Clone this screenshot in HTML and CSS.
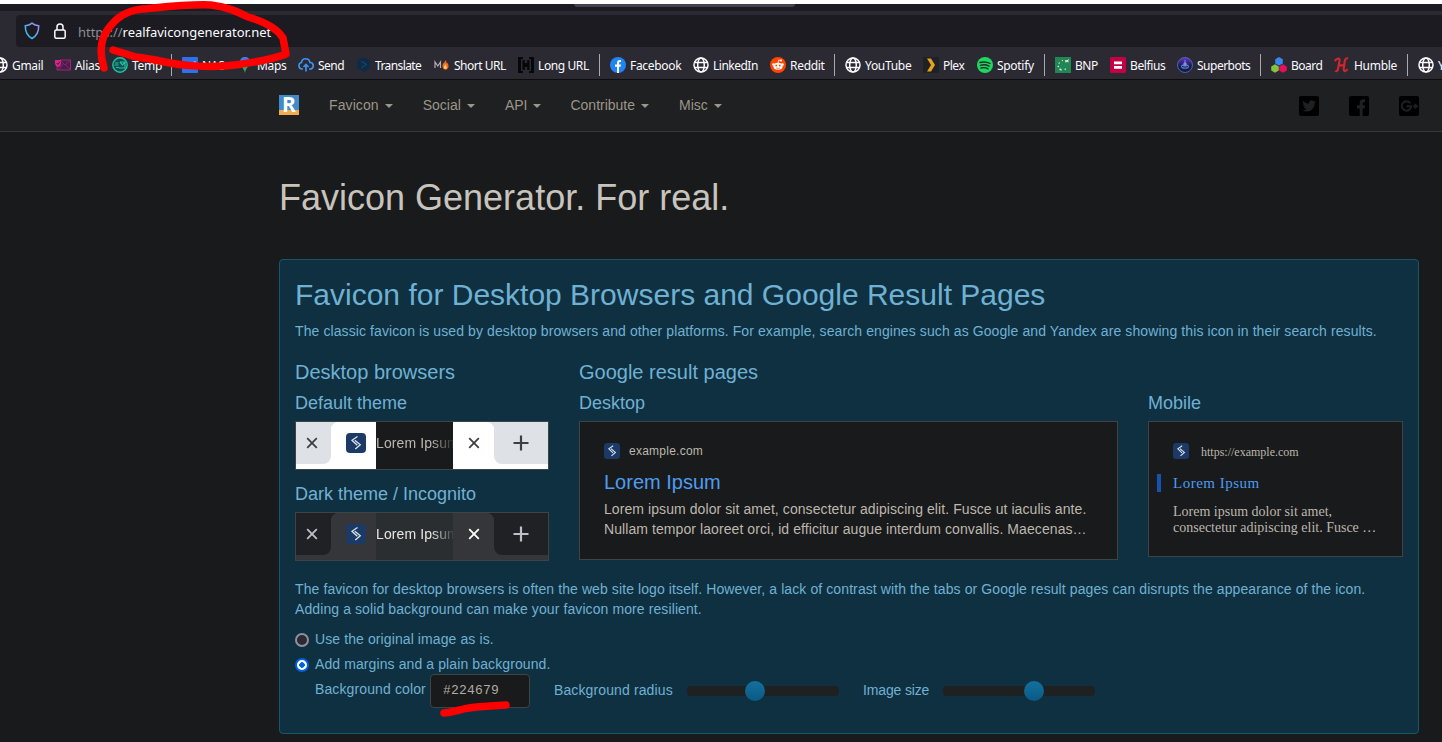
FILE: index.html
```html
<!DOCTYPE html>
<html lang="en">
<head>
<meta charset="utf-8">
<title>Favicon Generator. For real.</title>
<link rel="stylesheet" href="styles.css">
</head>
<body>
<svg class="defs" aria-hidden="true">
  <symbol id="globe" viewBox="0 0 16 16"><g fill="none" stroke="#fbfbfe" stroke-width="1.5"><circle cx="8" cy="8" r="7"/><ellipse cx="8" cy="8" rx="3.3" ry="7"/><path d="M1.6 5.6h12.8M1.6 10.4h12.8"/></g></symbol>
  <symbol id="mark" viewBox="0 0 20 20"><rect width="20" height="20" rx="4" fill="#1c3a66"/><path d="M11.500 3.500L6 7.300L11.300 12.300M8.800 7.200L14.300 11.800L9.300 16" fill="none" stroke="#dce4ec" stroke-width="1.300"/></symbol>
  <symbol id="cross" viewBox="0 0 12 12"><path d="M1.200 1.200l9.600 9.600M10.800 1.200l-9.600 9.600" stroke="currentColor" stroke-width="1.800"/></symbol>
  <symbol id="plus" viewBox="0 0 16 16"><path d="M8 .5v15M.5 8h15" stroke="currentColor" stroke-width="2.200"/></symbol>
</svg>

<div class="tabstrip"><div class="tab-edge"></div></div>
<div class="toolbar">
  <div class="urlbar">
    <svg class="shield" viewBox="0 0 16 18"><defs><linearGradient id="sg" x1="0" x2="1" y1="1" y2="0"><stop stop-color="#20c8ef"/><stop offset="1" stop-color="#a98bf0"/></linearGradient></defs><path d="M8 1.200C6 2.800 3.800 3.600 1.300 3.800C1.200 9.500 3 13.800 8 16.500C13 13.800 14.800 9.500 14.700 3.800C12.200 3.600 10 2.800 8 1.200Z" fill="none" stroke="url(#sg)" stroke-width="1.500"/></svg>
    <svg class="lock" viewBox="0 0 12 16"><path d="M3 7V4a3 3 0 0 1 6 0v3" fill="none" stroke="#fbfbfe" stroke-width="1.500"/><rect x=".8" y="7" width="10.400" height="8.200" rx="1.500" fill="none" stroke="#fbfbfe" stroke-width="1.500"/></svg>
    <div class="url"><span>https://</span>realfavicongenerator.net</div>
  </div>
  <div class="bookmarks">
    <div class="bm w-gmail"><svg><use href="#globe"/></svg><span>Gmail</span></div>
    <div class="bm w-alias"><svg viewBox="0 0 16 16"><path d="M5 3h10.500v10H2V8" fill="#461f48" stroke="#a22379"/><path d="M5 3l5 5 5.500-5M8 7l-5 6M11 8l4.500 5" fill="none" stroke="#a22379" stroke-width=".8"/><path d="M0 3h6v4a3.500 3.500 0 0 1-3 3A4 4 0 0 1 0 7z" fill="#e0218a"/><path d="M1.500 6l1.500 1.500L5 4.500" fill="none" stroke="#2b2a33"/></svg><span>Alias</span></div>
    <div class="bm w-temp"><svg viewBox="0 0 16 16"><circle cx="8" cy="8" r="7.200" fill="#154c50" stroke="#1dc4a0" stroke-width="1.400"/><path d="M8 5h5v6H7M8 5l2.500 3L13 5M3 6h3.500M2.500 8h4M4 10.500h3" fill="none" stroke="#1dc4a0" stroke-width="1.200"/></svg><span>Temp</span></div>
    <div class="sep"></div>
    <div class="bm w-nas"><svg viewBox="0 0 16 16"><rect width="16" height="16" rx="1" fill="#2c72ec"/><path d="M2 10V5l3 5V5M6.500 10L8 5l2 5M11 9c2 2 3 0 1-1.500S12 4 14 5.500" fill="none" stroke="#fff"/></svg><span>NAS</span></div>
    <div class="bm w-maps"><svg viewBox="0 0 16 16"><path d="M3 5a5 5 0 0 1 10 0c0 4-4 5-5 11C7 11 3 9 3 5z" fill="#34a853"/><path d="M3 5a5 5 0 0 1 10 0H3z" fill="#4078f2"/><path d="M3 5l3 5 5-6z" fill="#fbbc04"/><circle cx="8" cy="5.500" r="2" fill="#6f48c8"/></svg><span>Maps</span></div>
    <div class="bm w-send"><svg viewBox="0 0 16 16"><path d="M5 12H4A3.300 3.300 0 0 1 3.500 5.500C4 .5 11 .5 12 5.500A3.200 3.200 0 0 1 12 12h-1M8 14.500V8M5.500 10L8 7.500l2.500 2.500" fill="none" stroke="#3f91ee" stroke-width="1.700"/></svg><span>Send</span></div>
    <div class="bm w-translate"><svg viewBox="0 0 16 16"><path d="M7.500 0L14 3.600v7.600L9.500 14v2.200L6 13 1 11.200V3.600z" fill="#0d2b47"/><path d="M5.500 4.500l5 3-5 3" fill="none" stroke="#25496c"/></svg><span>Translate</span></div>
    <div class="bm w-short"><svg viewBox="0 0 16 16"><path d="M1 11V5l2.800 4L6.500 5v6" fill="none" stroke="#b3aeb7" stroke-width="1.200"/><path d="M11.500 3c0 2-3 3-3 6 0 5 6 5 6 0 0-2-1-2-1-3.500-1 .5-1 1-1 1.500 0-2 0-3-1-4z" fill="#f36a20"/><path d="M11.500 12c-3-1-1-3 0-5 0 2 3 4 0 5z" fill="#ffd261"/></svg><span>Short URL</span></div>
    <div class="bm w-long"><svg viewBox="0 0 16 16"><path d="M0 0h5v2H3v12h2v2H0zM16 0h-5v2h2v12h-2v2h5z" fill="#050809"/><path d="M4.500 3h2.300v3h2.400V3h2.300v10H9.200v-3H6.800v3H4.500z" fill="#050809"/></svg><span>Long URL</span></div>
    <div class="sep"></div>
    <div class="bm w-facebook"><svg viewBox="0 0 16 16"><circle cx="8" cy="8" r="8" fill="#2084f5"/><path d="M7 16V9.800H5V7.500h2V6c0-2.300 1.300-3.300 4-2.800v1.900c-1.400-.1-2 .1-2 1.200v1.200h2l-.4 2.300H9V16z" fill="#fff"/></svg><span>Facebook</span></div>
    <div class="bm w-linkedin"><svg><use href="#globe"/></svg><span>LinkedIn</span></div>
    <div class="bm w-reddit"><svg viewBox="0 0 16 16"><circle cx="8" cy="8" r="8" fill="#ff4500"/><ellipse cx="8" cy="9.300" rx="4.600" ry="3.500" fill="#fff"/><circle cx="3.500" cy="7.500" r="1.300" fill="#fff"/><circle cx="12.500" cy="7.500" r="1.300" fill="#fff"/><circle cx="11" cy="3.500" r="1.100" fill="#fff"/><path d="M8 6l.7-3 2.300.5" fill="none" stroke="#fff" stroke-width=".8"/><circle cx="6.200" cy="8.500" r=".9" fill="#ff4500"/><circle cx="9.800" cy="8.500" r=".9" fill="#ff4500"/><path d="M6.200 11q1.800 1 3.600 0" fill="none" stroke="#ff4500" stroke-width=".7"/></svg><span>Reddit</span></div>
    <div class="sep"></div>
    <div class="bm w-youtube"><svg><use href="#globe"/></svg><span>YouTube</span></div>
    <div class="bm w-plex"><svg viewBox="0 0 16 16"><rect width="16" height="16" fill="#202124"/><path d="M4 1.500h4l4 6.500-4 6.500H4L8 8z" fill="#e8a11b"/></svg><span>Plex</span></div>
    <div class="bm w-spotify"><svg viewBox="0 0 16 16"><circle cx="8" cy="8" r="8" fill="#1ed760"/><path d="M3 5.500q5.500-1.500 10 1M3.500 8.300q4.500-1.300 8.500.9M4 11q4-1 7 .8" fill="none" stroke="#23292b" stroke-width="1.400" stroke-linecap="round"/></svg><span>Spotify</span></div>
    <div class="sep"></div>
    <div class="bm w-bnp"><svg viewBox="0 0 16 16"><rect width="16" height="16" fill="#218653"/><path d="M10 3l2 .3L14 2l-.8 2L14 5.500l-2-.7-1.500 1zM6.500 3.500l1.500-.8v1.500zM3 6l2-.8-.6 1.800zM2 9.500l1.800-1 .4 2zM4 12l2-.5 1 2-2-.2zM9 12.300l1.800-1 .2 1.800z" fill="#d9eee2"/></svg><span>BNP</span></div>
    <div class="bm w-belfius"><svg viewBox="0 0 16 16"><rect width="16" height="16" rx="1" fill="#c30045"/><path d="M4 4.500h8v2.700H4zM4 9h8v2.700H4z" fill="#fff"/></svg><span>Belfius</span></div>
    <div class="bm w-superbots"><svg viewBox="0 0 16 16"><defs><linearGradient id="bot" x1="0" y1="0" x2="0" y2="1"><stop stop-color="#6a35c8"/><stop offset=".55" stop-color="#1b1c58"/><stop offset="1" stop-color="#151a42"/></linearGradient></defs><circle cx="8" cy="8" r="7.500" fill="url(#bot)" stroke="#487ab8" stroke-width=".8"/><ellipse cx="8" cy="9.500" rx="4" ry="2.300" fill="#5a82c9"/><circle cx="8" cy="7" r="1.700" fill="#7f91e0"/><path d="M8 3v3" stroke="#7f91e0"/><path d="M5 9.500q3 1.500 6 0" stroke="#1b2252" fill="none"/></svg><span>Superbots</span></div>
    <div class="sep"></div>
    <div class="bm w-board"><svg viewBox="0 0 16 16"><path d="M8 0l3.800 2.200v4.200L8 8.600 4.200 6.400V2.200z" fill="#3489ee"/><path d="M4 7.300l3.800 2.200v4L4 15.700.2 13.500v-4z" fill="#82c341"/><path d="M12 7.300l3.800 2.200v4L12 15.700l-3.800-2.200v-4z" fill="#e5105c"/></svg><span>Board</span></div>
    <div class="bm w-humble"><svg viewBox="0 0 16 16"><path d="M.5 4C3 1 6 .5 5.500 4L4 12c-.5 2.500-2 2.500-2.500 1.500M5 8.300h5M14 1.500c-2-.5-3 1-3.300 3L9.800 11c-.5 4 1.700 4 3.700 1" fill="none" stroke="#d0262d" stroke-width="2.200"/></svg><span>Humble</span></div>
    <div class="sep"></div>
    <div class="bm w-last"><svg><use href="#globe"/></svg><span>Y</span></div>
  </div>
</div>

<nav class="navbar">
  <div class="container nav-inner">
    <div class="brand"><span>R</span></div>
    <a class="n-favicon">Favicon<i></i></a><a class="n-social">Social<i></i></a><a class="n-api">API<i></i></a><a class="n-contribute">Contribute<i></i></a><a>Misc<i></i></a>
    <div class="social">
      <svg viewBox="0 0 20 20"><rect width="20" height="20" rx="2"/><path d="M17 5.500c-.6.300-1 .4-1.700.5.600-.4 1-.9 1.200-1.500-.5.300-1.200.6-1.800.7-2-2-5.200-.4-4.600 2.500-2.300-.1-4.300-1.100-5.800-3-.8 1.500-.4 3 .9 3.800-.5 0-.9-.1-1.300-.3 0 1.400 1 2.500 2.300 2.800-.5.100-.9.100-1.300 0 .4 1.200 1.400 2 2.700 2-1.200.9-2.600 1.300-4.200 1.200 5.500 3.300 12.400 0 12.200-7.200.6-.4 1-.9 1.400-1.500z" fill="#1e2021"/></svg>
      <svg viewBox="0 0 20 20"><rect width="20" height="20" rx="2"/><path d="M10.700 20v-7.500H8V9.300h2.700V7c0-2.800 1.700-4 5.300-3.600v2.900c-1.900-.1-2.300.2-2.300 1.400v1.600H16l-.4 3.200h-1.900V20z" fill="#1e2021"/></svg>
      <svg viewBox="0 0 20 20"><rect width="20" height="20" rx="2"/><path d="M11.300 7.200A4.700 4.700 0 1 0 12.200 10.200H7.500M14 10.200h5M16.500 7.700v5" fill="none" stroke="#1e2021" stroke-width="1.900"/></svg>
    </div>
  </div>
</nav>

<main class="container">
  <h1>Favicon Generator. For real.</h1>
  <section class="panel">
    <h2>Favicon for Desktop Browsers and Google Result Pages</h2>
    <p class="intro">The classic favicon is used by desktop browsers and other platforms. For example, search engines such as Google and Yandex are showing this icon in their search results.</p>
    <div class="columns">
      <div class="browsers">
        <h3>Desktop browsers</h3>
        <h4>Default theme</h4>
        <div class="preview light">
          <div class="side left"><svg class="x"><use href="#cross"/></svg></div>
          <div class="icon"><svg><use href="#mark"/></svg></div>
          <div class="title"><span>Lorem Ipsum</span></div>
          <div class="close"><svg class="x"><use href="#cross"/></svg></div>
          <div class="side right"><svg class="add"><use href="#plus"/></svg></div>
        </div>
        <h4 class="dark-heading">Dark theme / Incognito</h4>
        <div class="preview dark">
          <div class="side left"><svg class="x"><use href="#cross"/></svg></div>
          <div class="icon"><svg><use href="#mark"/></svg></div>
          <div class="title"><span>Lorem Ipsum</span></div>
          <div class="close"><svg class="x"><use href="#cross"/></svg></div>
          <div class="side right"><svg class="add"><use href="#plus"/></svg></div>
        </div>
      </div>
      <div class="google">
        <h3>Google result pages</h3>
        <div class="results">
          <div class="desktop">
            <h4>Desktop</h4>
            <div class="card">
              <div class="site"><svg><use href="#mark"/></svg>example.com</div>
              <div class="link">Lorem Ipsum</div>
              <div class="desc">Lorem ipsum dolor sit amet, consectetur adipiscing elit. Fusce ut iaculis ante.<br>Nullam tempor laoreet orci, id efficitur augue interdum convallis. Maecenas…</div>
            </div>
          </div>
          <div class="mobile">
            <h4>Mobile</h4>
            <div class="card">
              <div class="site"><svg><use href="#mark"/></svg>https://example.com</div>
              <div class="link">Lorem Ipsum</div>
              <div class="desc">Lorem ipsum dolor sit amet,<br>consectetur adipiscing elit. Fusce …</div>
            </div>
          </div>
        </div>
      </div>
    </div>
    <p class="note">The favicon for desktop browsers is often the web site logo itself. However, a lack of contrast with the tabs or Google result pages can disrupts the appearance of the icon.<br>Adding a solid background can make your favicon more resilient.</p>
    <div class="option"><span class="radio"></span>Use the original image as is.</div>
    <div class="option"><span class="radio checked"></span>Add margins and a plain background.</div>
    <div class="settings">
      <span class="color-label">Background color</span><div class="field">#224679</div>
      <span class="radius-label">Background radius</span><div class="slider radius"><i></i></div>
      <span class="size-label">Image size</span><div class="slider size"><i></i></div>
    </div>
  </section>
</main>

<svg class="ink" viewBox="0 0 1442 742">
  <path d="M104 68C99 52 100 40 108 29C117 17 126 11 142 9C164 7 188 4 211 5C228 7 238 12 248 17C262 21 277 28 283 38L286 54C271 60 250 63 235 65C212 68 184 66 165 62C151 59 143 58 136 57L113 50"/>
  <path d="M444 713C450 713 454 711 460 710C474 706 484 707 490 706L506 705"/>
</svg>
</body>
</html>
```
FILE: styles.css
```css
* { box-sizing: border-box; }
html, body { margin: 0; height: 742px; overflow: hidden; }
body { border-top: 4px solid #fff; background: #181a1b; font: 14px/20px "Liberation Sans", Arial, sans-serif; color: #c8c3bc; }
svg { flex: none; display: block; }
.defs { position: absolute; width: 0; height: 0; }
.container { width: 1140px; margin-left: 279px; }

.tabstrip { height: 7px; background: #1c1b22; }
.tab-edge { width: 221px; height: 3px; margin-left: 574px; background: #42414d; border-radius: 0 0 3px 3px; }
.toolbar { height: 69px; padding-top: 4px; background: #2b2a33; border-bottom: 1px solid #0c0c0d; }
.urlbar { display: flex; align-items: center; height: 32px; margin-left: 16px; padding-left: 8px; background: #1c1b22; border-radius: 4px 0 0 4px; }
.shield { width: 16px; height: 18px; }
.lock { width: 12px; height: 16px; margin-left: 14px; }
.url { margin: 2px 0 0 12px; font: 13px/20px "Noto Sans", sans-serif; color: #fbfbfe; letter-spacing: -.03px; white-space: nowrap; }
.url span { color: #8d8c92; }
.bookmarks { display: flex; align-items: center; height: 32px; margin-top: 2px; margin-left: -8px; font: 12px/16px "Noto Sans", sans-serif; color: #fbfbfe; letter-spacing: -.3px; white-space: nowrap; }
.bm { display: flex; flex: none; align-items: center; gap: 4px; }
.bm span { padding-top: 2px; }
.bm svg { width: 16px; height: 16px; }
.sep { flex: none; width: 1px; height: 22px; margin-right: 10px; background: #aaaaad; }
.w-gmail { width: 63px; }
.w-alias { width: 57px; }
.w-temp { width: 59px; }
.w-nas { width: 55px; }
.w-maps { width: 61px; }
.w-send { width: 58px; letter-spacing: -.5px; }
.w-translate { width: 78px; letter-spacing: -.6px; }
.w-short { width: 84px; letter-spacing: -.5px; }
.w-long { width: 81px; letter-spacing: -.4px; }
.w-facebook { width: 83px; }
.w-linkedin { width: 77px; letter-spacing: -.5px; }
.w-reddit { width: 64px; }
.w-youtube { width: 78px; }
.w-plex { width: 54px; letter-spacing: -.5px; }
.w-spotify { width: 67px; }
.w-bnp { width: 55px; letter-spacing: -.5px; }
.w-belfius { width: 67px; letter-spacing: -.4px; }
.w-superbots { width: 83px; letter-spacing: -.5px; }
.w-board { width: 63px; letter-spacing: -.5px; }
.w-humble { width: 73px; }
.w-last { width: 28px; }
.w-translate, .w-translate ~ .w-short { gap: 3px; }
.w-short span { margin-left: 1px; }

.navbar { height: 52px; background: #1e2021; border-bottom: 1px solid #35393b; color: #9d9588; }
.nav-inner { display: flex; align-items: center; height: 51px; }
.brand { display: flex; justify-content: center; align-items: center; width: 20px; height: 20px; margin: -1px 30px 0 0; background: linear-gradient(#428bca 75%, #f0ad4e 75%); color: #fff; font: bold 21px/20px "Open Sans", sans-serif; }
.brand span { margin-top: -2px; }
.navbar a { display: flex; align-items: center; gap: 6px; margin-top: -2px; }
.navbar a i { border: 4px solid transparent; border-top-color: currentColor; border-bottom: 0; margin-top: 2px; }
.n-favicon, .n-social, .n-api, .n-contribute { margin-right: 30px; }
.n-favicon { letter-spacing: .1px; }
.n-contribute { margin-left: -1px; }
.social { display: flex; gap: 30px; margin-left: auto; }
.social svg { width: 20px; height: 20px; margin-top: 1px; }

h1, h2, h3, h4, p { margin: 0; font-weight: 400; white-space: nowrap; }
h1 { height: 127px; padding-top: 46px; font-size: 36px; line-height: 40px; }
.panel { height: 475px; padding: 15px; background: #0f3040; border: 1px solid #165867; border-radius: 4px; color: #6fb1d3; }
h2 { height: 46px; padding-top: 3px; font-size: 30px; line-height: 34px; }
.intro, .note { letter-spacing: .096px; }
.intro { margin-bottom: 20px; }
.columns { display: flex; gap: 30px; height: 218px; }
.browsers { width: 254px; }
.google { width: 824px; }
h3 { height: 31px; font-size: 20px; line-height: 22px; }
h4 { height: 29px; padding-top: 1px; font-size: 18px; line-height: 20px; }
.dark-heading { height: 28px; margin-top: 14px; padding-top: 0; }
.preview { display: flex; width: 254px; height: 49px; border: 1px solid #3e4446; }
.side { display: flex; height: 42px; justify-content: center; align-items: center; }
.left { width: 35px; border-radius: 0 0 8px 0; padding-right: 3px; }
.right { width: 54px; border-radius: 0 0 0 8px; }
.icon { width: 45px; padding: 11px 0 0 15px; }
.icon svg { width: 20px; height: 20px; }
.title { width: 77px; overflow: hidden; padding-top: 11px; }
.title span { display: block; width: 77px; overflow: hidden; white-space: nowrap; -webkit-mask-image: linear-gradient(90deg, #000 55px, transparent 80px); mask-image: linear-gradient(90deg, #000 55px, transparent 80px); letter-spacing: .1px; }
.close { width: 41px; padding: 15px 0 0 15px; }
.x { width: 12px; height: 12px; }
.add { width: 16px; height: 16px; }
.light { --tab: #fff; --strip: #dee1e6; background: #fff; color: #3c4043; }
.dark { --tab: #35363a; --strip: #202124; background: #35363a; color: #bdc1c6; }
.side { background: var(--strip); }
.light .title { background: #181a1b; color: #bdb7af; }
.dark .title { background: #2a2e30; color: #e8e6e3; }
.icon { background: radial-gradient(circle at 8px 8px, var(--tab) 8px, var(--strip) 8.5px) 0 0 / 8px 8px no-repeat, var(--tab); }
.close { background: radial-gradient(circle at 0 8px, var(--tab) 8px, var(--strip) 8.5px) 100% 0 / 8px 8px no-repeat, var(--tab); }
.dark .close { color: #fff; }
.results { display: flex; gap: 30px; }
.desktop { width: 539px; }
.mobile { width: 255px; }
.card { background: #181a1b; border: 1px solid #3e4446; color: #bdb7af; white-space: nowrap; }
.site { display: flex; align-items: center; }
.site svg { width: 16px; height: 16px; }
.link { color: #4f9cf0; }
.desktop .card { height: 139px; padding: 19px 24px; }
.desktop .site { gap: 9px; height: 20px; font-size: 12px; letter-spacing: .25px; }
.desktop .link { margin: 7px 0 3px; font-size: 20px; line-height: 28px; }
.desktop .desc { letter-spacing: .078px; }
.mobile .card { height: 136px; padding: 19px 24px; font-family: "Liberation Serif", serif; }
.mobile .site { gap: 12px; height: 20px; padding-top: 1px; font-size: 12px; }
.mobile .site svg { margin-top: -1px; }
.mobile .link { margin: 13px 0 12px -16px; padding-left: 12px; border-left: 4px solid #1752b0; font-size: 15px; line-height: 18px; letter-spacing: .5px; }
.mobile .desc { line-height: 16px; font-size: 14px; }
.note { margin-bottom: 10px; }
.option { display: flex; align-items: center; height: 20px; margin-bottom: 5px; letter-spacing: .1px; }
.radio { width: 14px; height: 14px; margin: 2px 6px 0 0; border: 2px solid #8f8f9d; border-radius: 50%; background: #2b2a33; }
.checked { border-color: #0061e0; background: radial-gradient(circle, #0061e0 2.500px, #fff 3px); }
.settings { display: flex; align-items: center; height: 34px; margin: -5px 0 0 20px; }
.color-label { width: 115px; margin-top: -4px; letter-spacing: .12px; }
.field { display: flex; align-items: center; width: 100px; height: 34px; padding: 0 12px; border: 1px solid #3e4446; border-radius: 4px; background: #181a1b; color: #b2aba1; font: 13px/20px "Liberation Mono", monospace; letter-spacing: .2px; }
.radius-label { width: 133px; margin: -2px 0 0 24px; letter-spacing: .12px; }
.size-label { width: 80px; margin: -2px 0 0 24px; letter-spacing: -.15px; }
.slider { width: 152px; height: 10px; border-radius: 4px; background: #1e2021; }
.slider i { display: block; width: 20px; height: 20px; margin-top: -5px; border-radius: 50%; background: linear-gradient(#14709e, #085a86); }
.radius i { margin-left: 58px; }
.size i { margin-left: 81px; }
.ink { position: absolute; left: 0; top: 0; width: 1442px; height: 742px; fill: none; stroke: #f00; stroke-width: 7.500; stroke-linecap: round; stroke-linejoin: round; pointer-events: none; }
```
